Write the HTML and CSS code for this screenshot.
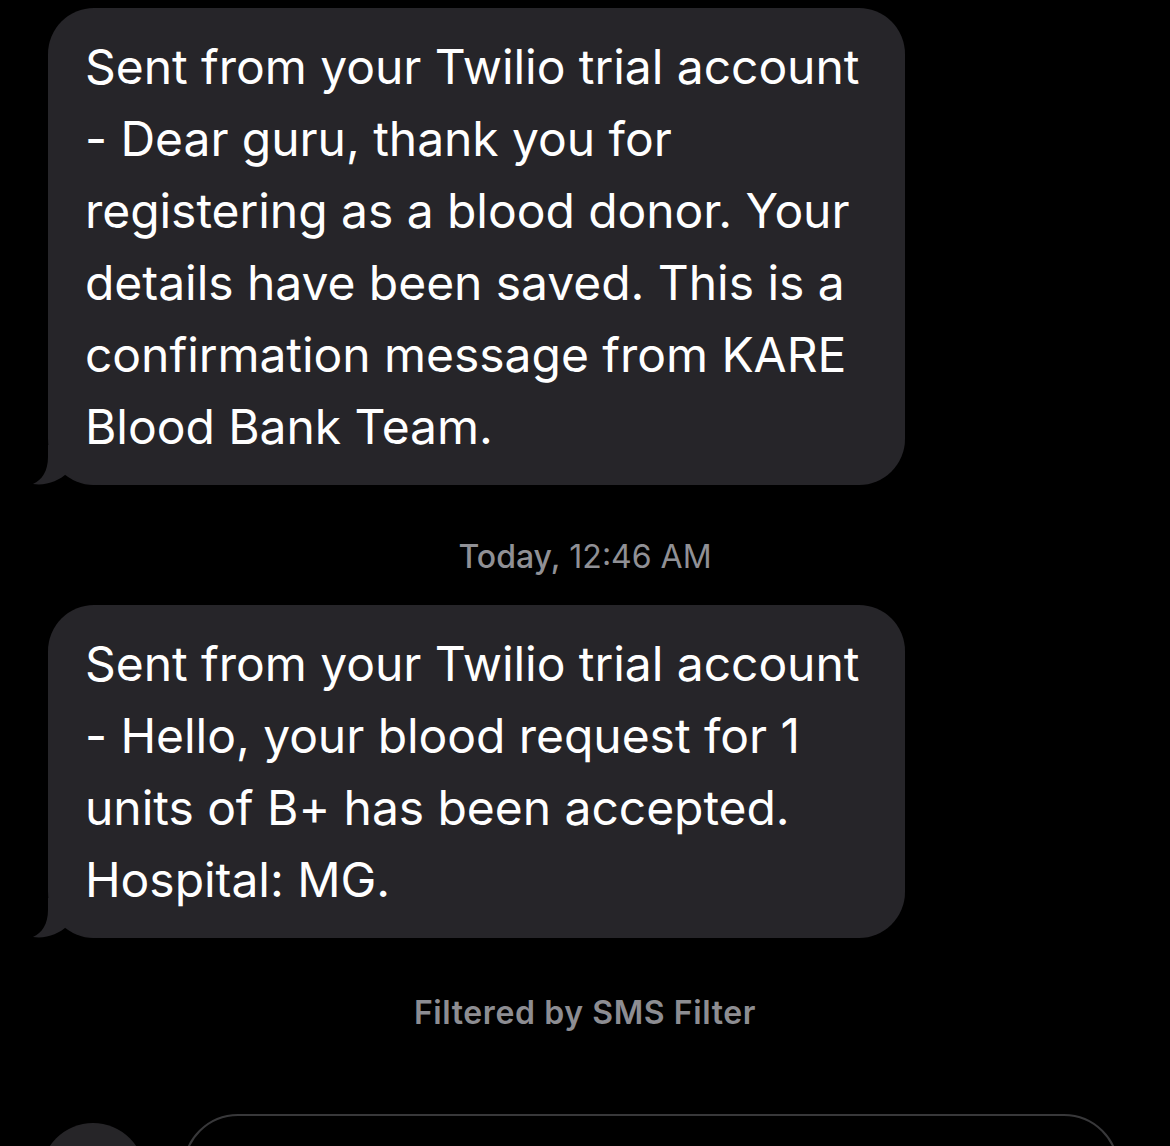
FILE: index.html
```
<!DOCTYPE html>
<html lang="en">
<head>
<meta charset="utf-8">
<title>Messages</title>
<link rel="stylesheet" href="styles.css">
</head>
<body>
<main class="thread">
  <div class="bubble">
    <p class="bubble-text">Sent from your Twilio trial account - Dear guru, thank you for registering as a blood donor. Your details have been saved. This is a confirmation message from KARE Blood Bank Team.</p>
    <svg class="tail" width="80" height="40" viewBox="0 0 80 40" aria-hidden="true"><path d="M16,0 L16,12 C16,26 10,35 1,39 C14,41 27,36 35,28 C40,35 50,40 70,40 L70,0 Z"/></svg>
  </div>

  <div class="timestamp"><span class="ts-day">Today,</span> 12:46 AM</div>

  <div class="bubble">
    <p class="bubble-text">Sent from your Twilio trial account - Hello, your blood request for 1 units of B+ has been accepted. Hospital: MG.</p>
    <svg class="tail" width="80" height="40" viewBox="0 0 80 40" aria-hidden="true"><path d="M16,0 L16,12 C16,26 10,35 1,39 C14,41 27,36 35,28 C40,35 50,40 70,40 L70,0 Z"/></svg>
  </div>

  <div class="filter-note">Filtered by SMS Filter</div>

  <div class="composer">
    <div class="apps-button"></div>
    <div class="input-field"></div>
  </div>
</main>
</body>
</html>
```
FILE: styles.css
```
html, body {
  margin: 0;
  padding: 0;
  height: 1146px;
  overflow: hidden;
  background: #000;
}

body {
  font-family: "Inter", "Liberation Sans", sans-serif;
  color: #fff;
}

.thread {
  display: flex;
  flex-direction: column;
  padding-top: 8px;
}

.bubble {
  position: relative;
  width: 857px;
  box-sizing: border-box;
  margin-left: 48px;
  padding: 23px 36px 22px 37px;
  background: #262529;
  border-radius: 46px;
}

.bubble-text {
  margin: 0;
  font-size: 48px;
  line-height: 72px;
  letter-spacing: -0.05px;
  font-weight: 400;
  color: #fff;
}

.tail {
  position: absolute;
  left: -16px;
  bottom: 0;
  display: block;
}

.tail path {
  fill: #262529;
}

.timestamp {
  margin: 52px 0 28px;
  text-align: center;
  font-size: 32px;
  line-height: 40px;
  color: #909095;
  font-weight: 400;
}

.ts-day {
  font-weight: 500;
}

.filter-note {
  margin-top: 55px;
  text-align: center;
  font-size: 32px;
  line-height: 40px;
  font-weight: 600;
  letter-spacing: 0.6px;
  color: #8d8d92;
}

.composer {
  display: flex;
  align-items: flex-start;
  gap: 38px;
  height: 33px;
  overflow: hidden;
  margin-top: 81px;
  padding-left: 41px;
}

.apps-button {
  flex: none;
  width: 104px;
  height: 104px;
  margin-top: 9px;
  border-radius: 50%;
  background: #262528;
}

.input-field {
  flex: none;
  width: 936px;
  height: 110px;
  box-sizing: border-box;
  border: 2px solid #38383a;
  border-radius: 56px;
}
```
